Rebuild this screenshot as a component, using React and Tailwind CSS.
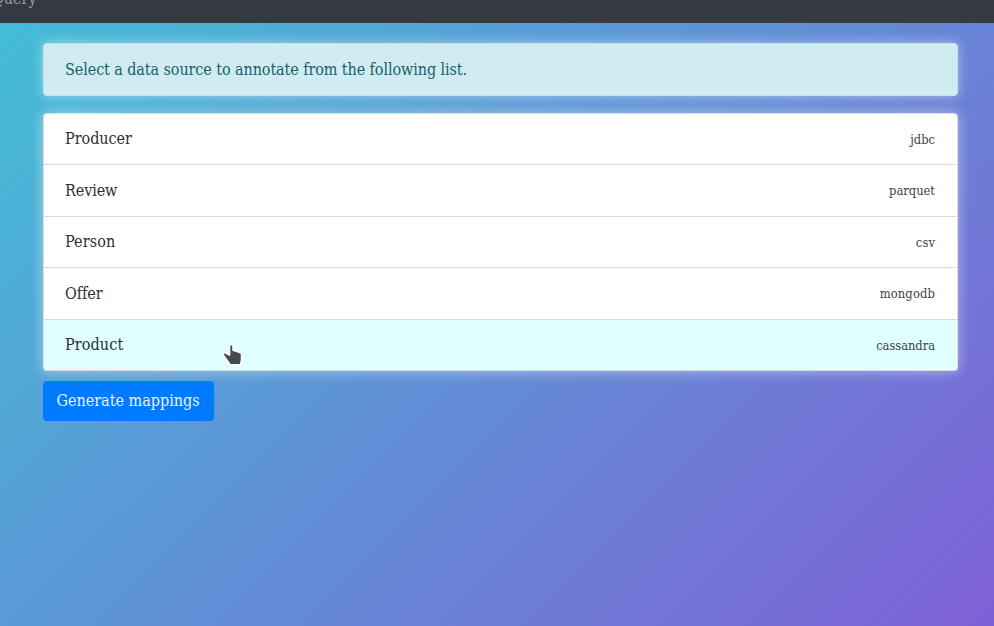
const sources = [
  { name: 'Producer', type: 'jdbc', row: 'h-13 bg-white', nameClass: 'tracking-[-0.03px]', typeClass: 'tracking-[0px]' },
  { name: 'Review', type: 'parquet', row: 'h-13 bg-white', nameClass: 'tracking-[-0.1px]', typeClass: 'tracking-[0px] -translate-y-px' },
  { name: 'Person', type: 'csv', row: 'h-[51px] bg-white', nameClass: 'tracking-[0.1px]', typeClass: 'tracking-[0.1px]' },
  { name: 'Offer', type: 'mongodb', row: 'h-13 bg-white', nameClass: 'tracking-[-0.05px]', typeClass: 'tracking-[0.15px] -translate-y-px' },
  { name: 'Product', type: 'cassandra', row: 'h-[51px] bg-[#e0ffff]', nameClass: 'tracking-[0.1px]', typeClass: 'tracking-[-0.03px]' },
];

function Pointer() {
  return (
    <svg className="absolute left-[221px] top-[342px] h-[26px] w-[23px]" viewBox="0 0 23 26">
      <path
        d="M8.6 4.2c0-2.2 3.4-2.2 3.4 0v4.2l7 2.2c1 .3 1.5.9 1.5 1.7v6L19.4 22.8H9.2L2.3 13c-1-1.6.6-3 2.3-2l4 2.1Z"
        fill="#434b4e" stroke="#fff" strokeWidth="1.5" strokeLinejoin="round"
      />
    </svg>
  );
}

export default function App() {
  return (
    <div className="flex h-[626px] w-[994px] flex-col overflow-hidden font-['DejaVu_Serif_Condensed','DejaVu_Serif',serif] text-[16px] text-[#2b2f34]">
      <header className="h-[23px] shrink-0 overflow-hidden bg-[#343a40]">
        <span className="-ml-[8px] -mt-[12px] block leading-[22px] text-[#9a9da0]">Query</span>
      </header>
      <main className="flex-1 bg-[linear-gradient(135deg,#43bdd6_0%,#7f60d6_100%)] pl-[43px] pr-9 pt-5">
        <div className="flex h-[53px] items-center rounded border border-[#bee5eb] bg-[#d1ecf1] px-[21px] text-[#17606c] shadow-[0_0_12px_rgba(255,255,255,0.5)]">
          <span className="tracking-[-0.09px]">Select a data source to annotate from the following list.</span>
        </div>
        <ul className="mt-[17px] overflow-hidden rounded border border-b-0 border-[#dfdfdf] shadow-[0_0_14px_rgba(255,255,255,0.5)]">
          {sources.map((s, i) => (
            <li key={s.name} className={`flex items-center justify-between border-b border-[#d5dbdd] px-[21px] ${i === 0 ? '-mt-px' : ''} ${s.row}`}>
              <span className={s.nameClass}>{s.name}</span>
              <small className={`mr-px mt-0.5 text-[12.8px] text-[#3d4248] ${s.typeClass}`}>{s.type}</small>
            </li>
          ))}
        </ul>
        <button className="mt-2.5 flex h-10 w-[171px] items-center justify-center rounded bg-[#007bff] pr-px text-[#e8f3ff]">
          <span>Generate mappings</span>
        </button>
      </main>
      <Pointer />
    </div>
  );
}
